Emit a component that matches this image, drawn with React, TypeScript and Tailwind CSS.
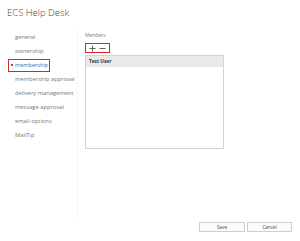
const navItems = [
  'general',
  'ownership',
  'membership',
  'membership approval',
  'delivery management',
  'message approval',
  'email options',
  'MailTip',
];

export default function App() {
  return (
    <div className="w-[300px] h-[241px] bg-white flex flex-col font-['Open_Sans',sans-serif] text-[#666] overflow-hidden">
      {/* Titolo */}
      <div className="h-[28px] pl-[7px] pt-[6px] text-[9.5px] leading-[13px] font-light text-[#444]">ECS Help Desk</div>

      <div className="flex flex-1">
        {/* Menu laterale */}
        <div className="w-[78px] border-r border-[#f7f7f7] pt-[2px]">
          {navItems.map((item) =>
            item === 'membership' ? (
              <div key={item} className="h-[14px] flex items-center">
                <div className="ml-[8px] h-[13px] w-[42px] border-[1.5px] border-[#e0232b] flex items-center whitespace-nowrap overflow-hidden text-[5.6px] text-[#2f6fc0]">
                  <span className="ml-[2px] mr-[2px] w-[2px] h-[2px] shrink-0 rounded-full bg-[#333]" />
                  {item}
                </div>
              </div>
            ) : (
              <div key={item} className="h-[14px] leading-[14px] pl-[15px] whitespace-nowrap text-[5.8px] text-[#777]">
                {item}
              </div>
            )
          )}
        </div>

        {/* Contenuto */}
        <div className="flex-1 flex flex-col pl-[7px] pt-[3px]">
          <div className="text-[4.6px] leading-[8px] text-[#777]">Members</div>
          <div className="mt-[4px] w-[25px] h-[10px] border-[1.5px] border-[#e0232b] flex items-center justify-around px-[1px]">
            <svg width="7" height="7" viewBox="0 0 7 7">
              <path d="M3.5 0.5V6.5M0.5 3.5H6.5" stroke="#555" strokeWidth="0.9" />
            </svg>
            <svg width="7" height="7" viewBox="0 0 7 7">
              <path d="M0.5 3.5H6.5" stroke="#555" strokeWidth="0.9" />
            </svg>
          </div>
          <div className="mt-[2px] w-[139px] h-[94px] border border-[#d4d4d4]">
            <div className="h-[11px] bg-[#e9e9eb] flex items-center pl-[3px] text-[4.8px] font-bold text-[#333]">Test User</div>
          </div>
        </div>
      </div>

      {/* Pulsanti */}
      <div className="h-[19px] flex justify-end gap-[2px] pr-[8px]">
        <button className="w-[46px] h-[10px] border border-[#cfcfcf] bg-[#fbfbfb] text-[4.6px] text-[#444] leading-none">Save</button>
        <button className="w-[45px] h-[10px] border border-[#cfcfcf] bg-[#fbfbfb] text-[4.6px] text-[#444] leading-none">Cancel</button>
      </div>
    </div>
  );
}
